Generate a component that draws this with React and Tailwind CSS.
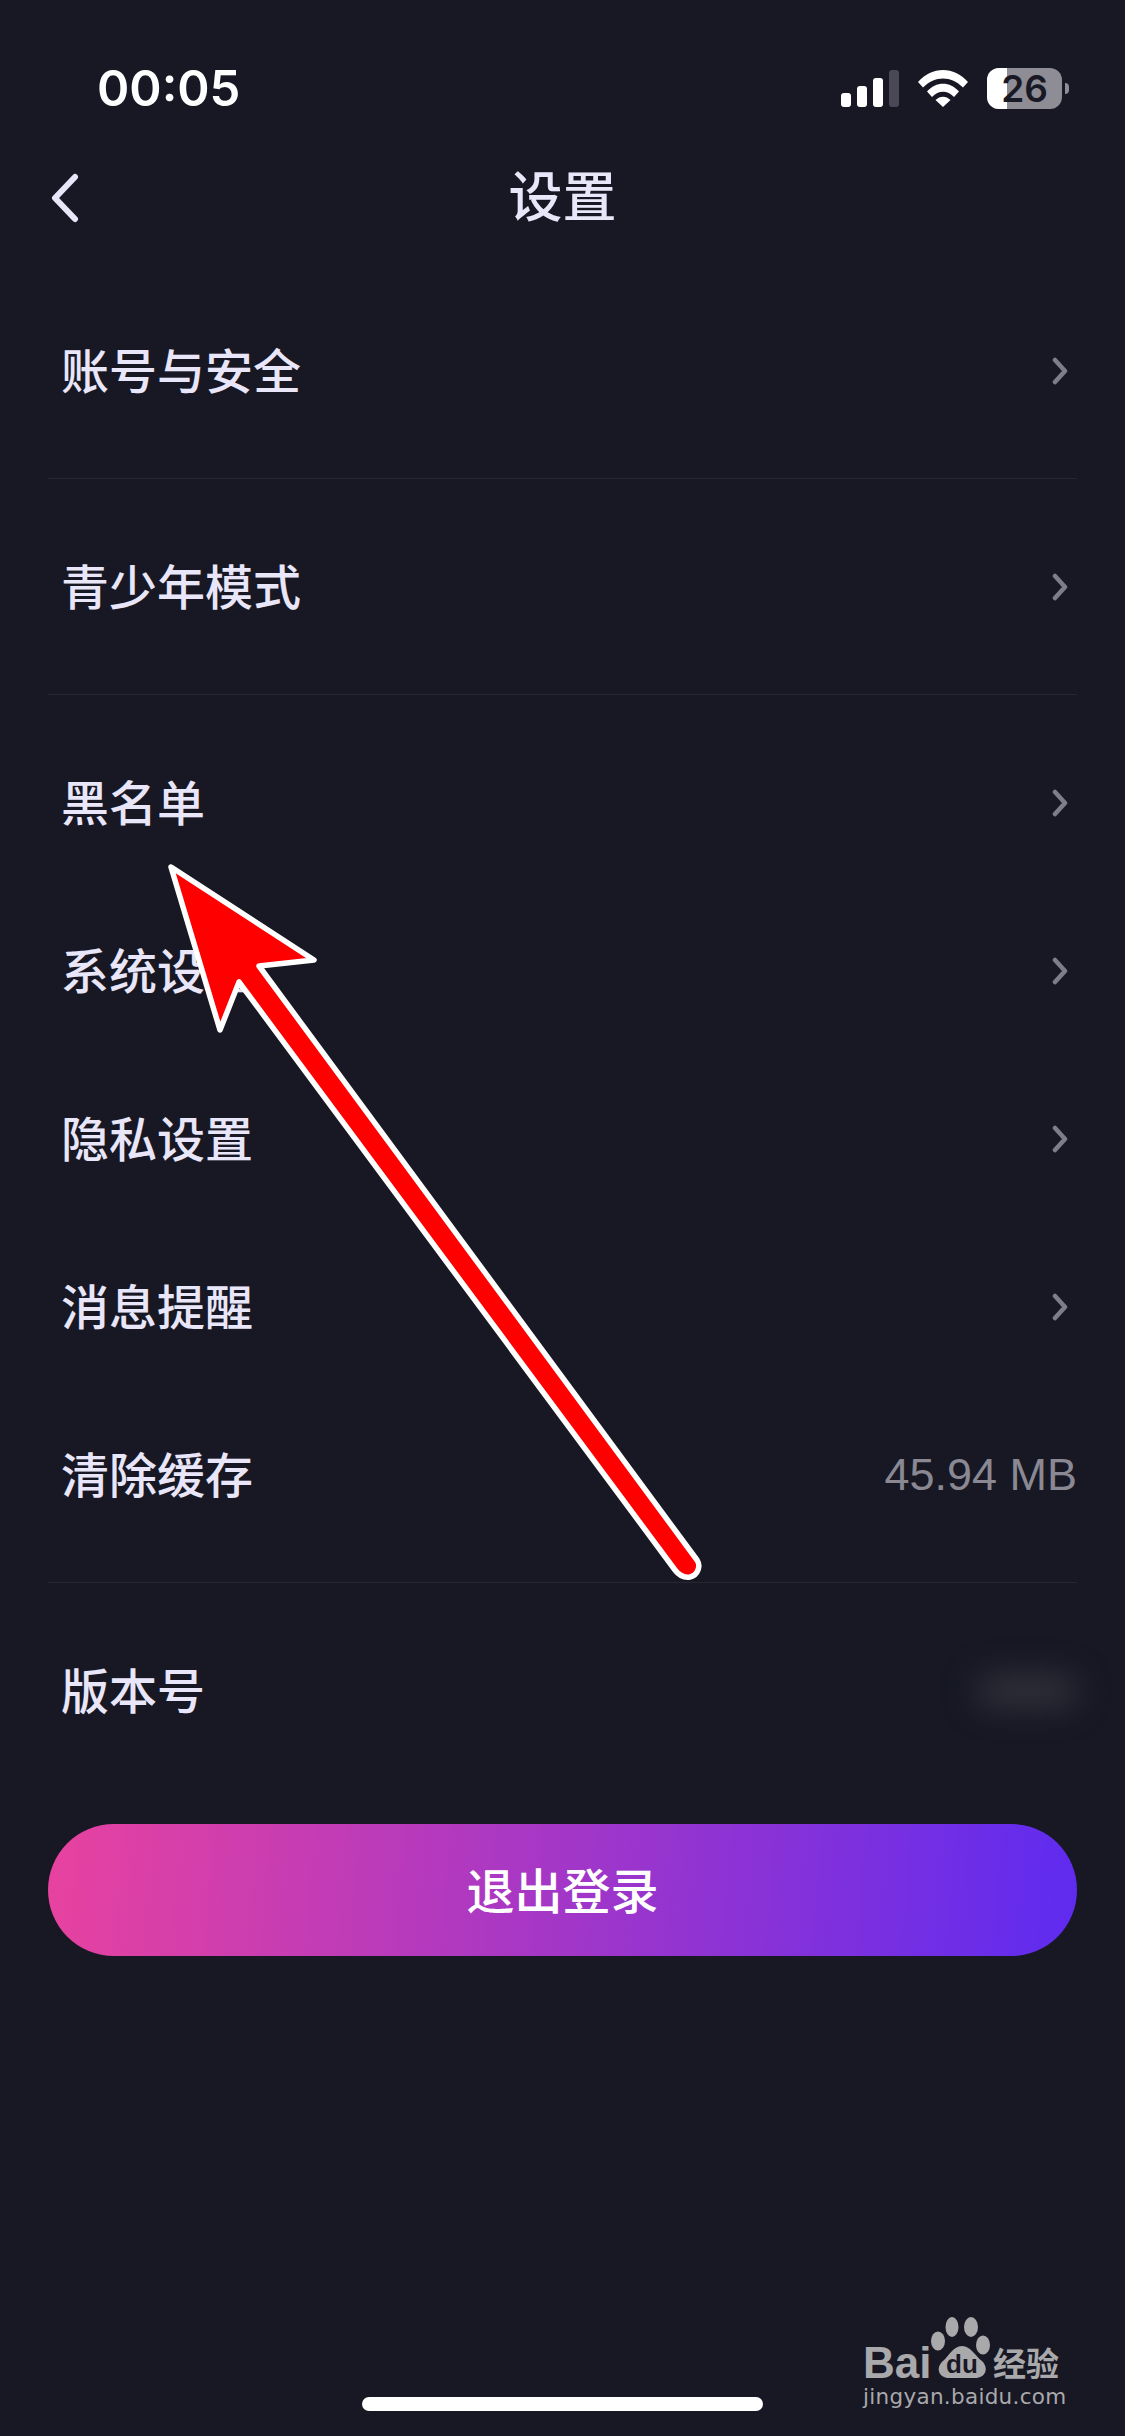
const cjk = "font-['Noto_Sans_CJK_SC',sans-serif]";

const rows = [
  { label: '账号与安全', divider: true },
  { label: '青少年模式', divider: true },
  { label: '黑名单' },
  { label: '系统设置' },
  { label: '隐私设置' },
  { label: '消息提醒' },
  { label: '清除缓存', value: '45.94 MB', divider: true },
  { label: '版本号', blurred: true },
];

function SignalIcon() {
  return (
    <svg width="58" height="37" viewBox="0 0 58 37" className="shrink-0">
      <rect x="0" y="23" width="10" height="14" rx="3" fill="#fff" />
      <rect x="16" y="16" width="10" height="21" rx="3" fill="#fff" />
      <rect x="32" y="8" width="10" height="29" rx="3" fill="#fff" />
      <rect x="48" y="0" width="10" height="37" rx="3" fill="#4a4854" />
    </svg>
  );
}

function WifiIcon() {
  return (
    <svg width="50" height="37" viewBox="0 0 50 37" className="shrink-0">
      <path d="M0 12 C14 -4 36 -4 50 12 L45 17.5 C33 5.5 17 5.5 5 17.5 Z" fill="#fff" />
      <path d="M9 21.5 C18 11 32 11 41 21.5 L36 27 C29.5 20 20.5 20 14 27 Z" fill="#fff" />
      <path d="M17.5 30 C22 25.5 28 25.5 32.5 30 L25 37 Z" fill="#fff" />
    </svg>
  );
}

function BatteryIcon() {
  return (
    <div className="flex items-center gap-[3px]">
      <div className="relative flex h-[41px] w-[75px] items-center justify-center rounded-[12px] bg-[#8e8c94]">
        <div className="absolute inset-y-0 left-0 w-[20px] rounded-l-[12px] bg-white" />
        <span className="relative font-['Inter',sans-serif] text-[37px] leading-none font-semibold text-[#191926]">26</span>
      </div>
      <div className="h-[11px] w-[4px] rounded-r-full bg-[#8e8c94]" />
    </div>
  );
}

function Chevron() {
  return (
    <svg width="16" height="28" viewBox="0 0 16 28" fill="none" className="shrink-0">
      <path d="M3 3 L13 14 L3 25" stroke="#7f7d8c" strokeWidth="4.5" strokeLinecap="round" strokeLinejoin="round" />
    </svg>
  );
}

function Row({ row }) {
  return (
    <div className="flex h-[168px] items-center justify-between">
      <span className={`${cjk} mb-[6px] pl-[13px] text-[48px] leading-none font-medium text-[#e8e6f8]`}>{row.label}</span>
      {row.value && <span className="mb-[2px] font-['Liberation_Sans',sans-serif] text-[45px] leading-none text-[#8a8993]">{row.value}</span>}
      {row.blurred && <div className="h-[30px] w-[100px] rounded-full bg-[#33333d] blur-[16px]" />}
      {!row.value && !row.blurred && <div className="pr-[9px]"><Chevron /></div>}
    </div>
  );
}

function Arrow() {
  return (
    <svg width="1125" height="2436" viewBox="0 0 1125 2436" className="pointer-events-none absolute inset-0">
      <path
        d="M171 867 L314 960 L259 966 L697 1560 C701 1566 698 1575 690 1577 C683 1578 678 1574 675 1570 L239 982 L220 1030 Z"
        fill="#ff0000"
        stroke="#fff"
        strokeWidth="5.5"
        strokeLinejoin="round"
      />
    </svg>
  );
}

function Watermark() {
  return (
    <div className="absolute left-[863px] top-[2316px] h-[94px] w-[205px] text-[#a9a9ac]">
      <svg width="80" height="68" viewBox="0 0 80 68" className="absolute left-[59px] top-0">
        <g fill="#a9a9ac">
          <ellipse cx="16" cy="25" rx="7" ry="9.5" />
          <ellipse cx="30" cy="11" rx="6.5" ry="10" />
          <ellipse cx="49" cy="11" rx="7" ry="10" />
          <ellipse cx="61" cy="29" rx="7" ry="9.5" />
          <path d="M40 30 C31 30 27 40 21 45 C13 52 17 62 27 62 L53 62 C64 62 67 52 60 45 C53 40 49 30 40 30 Z" />
        </g>
      </svg>
      <span className="absolute left-0 top-[25px] font-['Liberation_Sans',sans-serif] text-[44px] leading-none font-bold">Bai</span>
      <span className="absolute left-[83px] top-[35px] font-['Liberation_Sans',sans-serif] text-[26px] leading-none font-bold text-[#191926]">du</span>
      <span className={`${cjk} absolute left-[130px] top-[30px] text-[33px] leading-none font-bold`}>经验</span>
      <span className="absolute left-0 top-[70px] font-['DejaVu_Sans',sans-serif] text-[21.5px] leading-none tracking-[0.3px] whitespace-nowrap">jingyan.baidu.com</span>
    </div>
  );
}

export default function App() {
  return (
    <div className="relative h-[2436px] w-[1125px] overflow-hidden bg-[#171824]">
      {/* status bar */}
      <div className="flex h-[68px] items-start justify-between pr-[56px] pl-[97px] pt-[68px]">
        <span className="font-['Inter',sans-serif] text-[49px] leading-[41px] font-semibold text-white">00:05</span>
        <div className="flex items-start gap-[19px]">
          <div className="pt-[2px]"><SignalIcon /></div>
          <div className="pt-[2px]"><WifiIcon /></div>
          <BatteryIcon />
        </div>
      </div>

      {/* nav */}
      <div className="relative mt-[93px] flex h-[66px] items-center justify-center">
        <svg width="30" height="50" viewBox="0 0 30 50" fill="none" className="absolute left-[50px] top-[12px]">
          <path d="M25 4 L5 25 L25 46" stroke="#e8e6f8" strokeWidth="6" strokeLinecap="round" strokeLinejoin="round" />
        </svg>
        <span className={`${cjk} text-[54px] leading-none font-medium text-[#e8e6f8]`}>设置</span>
      </div>

      <div className="mt-[60px] px-[48px]">
        {rows.map((row) => (
          <div key={row.label}>
            <Row row={row} />
            {row.divider && <div className="mt-[23px] mb-[24px] h-[1px] bg-[#272731]" />}
          </div>
        ))}

        <button className="mt-[49px] flex h-[132px] w-full items-center justify-center rounded-full bg-[linear-gradient(95deg,#e8429f,#5e2bf0)]">
          <span className={`${cjk} mb-[4px] text-[48px] leading-none font-medium text-white`}>退出登录</span>
        </button>
      </div>

      <Arrow />
      <Watermark />
      <div className="absolute bottom-[25px] left-[362px] h-[14px] w-[401px] rounded-full bg-white" />
    </div>
  );
}
